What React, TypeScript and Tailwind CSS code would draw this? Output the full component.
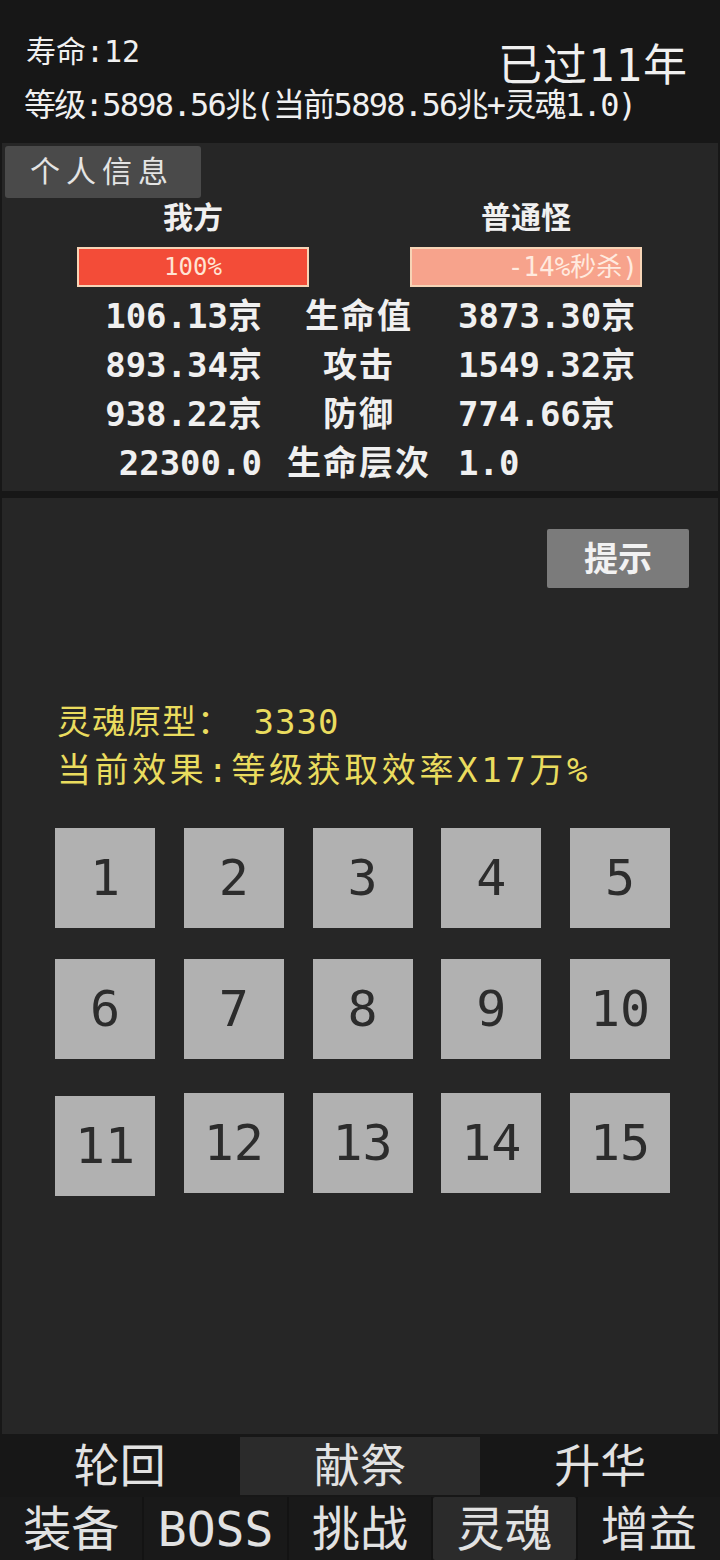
import React from "react";

const stats = [
  { mine: "106.13京", label: "生命值", enemy: "3873.30京" },
  { mine: "893.34京", label: "攻击", enemy: "1549.32京" },
  { mine: "938.22京", label: "防御", enemy: "774.66京" },
  { mine: "22300.0", label: "生命层次", enemy: "1.0" },
];

const gridRows = [
  [1, 2, 3, 4, 5],
  [6, 7, 8, 9, 10],
  [11, 12, 13, 14, 15],
];

const topTabs = [
  { title: "轮回", active: false },
  { title: "献祭", active: true },
  { title: "升华", active: false },
];

const bottomTabs = [
  { title: "装备", active: false },
  { title: "BOSS", active: false },
  { title: "挑战", active: false },
  { title: "灵魂", active: true },
  { title: "增益", active: false },
];

export default function App() {
  return (
    <div className="flex h-[1560px] w-[720px] flex-col overflow-hidden bg-[#171717] font-['DejaVu_Sans_Mono','Noto_Sans_CJK_SC',monospace] text-[#f0f0f0]">
      {/* header */}
      <header className="h-[143px] shrink-0 pl-[26px] pr-[32px] pt-[37px]">
        <div className="flex items-start justify-between">
          <span className="text-[30px] leading-none">寿命:12</span>
          <span className="mt-[7px] text-[44px] leading-none tracking-[1px]">已过11年</span>
        </div>
        <div className="-ml-[2px] mt-[1px] text-[32px] leading-none tracking-[-1.7px] whitespace-nowrap">
          等级:5898.56兆(当前5898.56兆+灵魂1.0)
        </div>
      </header>

      {/* battle info */}
      <section className="mx-[2px] flex h-[348px] shrink-0 flex-col bg-[#262626]">
        <div className="ml-[3px] mt-[3px] flex h-[52px] w-[196px] items-center rounded-[3px] bg-[#4a4a4a] pl-[25px] text-[30px] leading-none tracking-[6px] text-[#e4e4e4]">
          个人信息
        </div>
        <div className="ml-[75px] mt-[5px] grid grid-cols-[232px_232px] gap-x-[101px]">
          <div className="h-[34px] text-center text-[30px] font-bold leading-none">我方</div>
          <div className="h-[34px] text-center text-[30px] font-bold leading-none">普通怪</div>
          <div className="mt-[10px] flex h-[40px] items-center justify-center border-2 border-[#f6d4b6] bg-[#f34c38] text-[24px] leading-none text-[#ffe4d4]">
            100%
          </div>
          <div className="mt-[10px] flex h-[40px] items-center justify-end overflow-hidden whitespace-nowrap border-2 border-[#f6d4b6] bg-[#f7a38c] pr-[2px] text-[26px] leading-none text-[#ffeadf]">
            -14%秒杀)
          </div>
        </div>
        <div className="mt-[4px] grid grid-cols-[260px_194px_1fr] text-[34px] font-bold leading-none">
          {stats.map((s) => (
            <React.Fragment key={s.label}>
              <div className="flex h-[49px] items-center justify-end whitespace-nowrap">{s.mine}</div>
              <div className="flex h-[49px] items-center justify-center whitespace-nowrap tracking-[2px]">{s.label}</div>
              <div className="flex h-[49px] items-center whitespace-nowrap pl-[2px]">{s.enemy}</div>
            </React.Fragment>
          ))}
        </div>
      </section>

      {/* soul panel */}
      <section className="mx-[2px] mt-[7px] flex h-[936px] shrink-0 flex-col bg-[#262626]">
        <div className="flex justify-end pr-[29px] pt-[31px]">
          <div className="flex h-[59px] w-[142px] items-center justify-center rounded-[2px] bg-[#7b7b7b] text-[34px] font-semibold leading-none text-[#f2f2f2]">
            提示
          </div>
        </div>
        <div className="ml-[55px] mt-[117px] text-[34px] leading-none text-[#eadc5e]">
          <div className="whitespace-nowrap tracking-[1px]">灵魂原型： 3330</div>
          <div className="mt-[14px] whitespace-nowrap tracking-[3.6px]">当前效果:等级获取效率X17万%</div>
        </div>
        <div className="ml-[53px] mt-[41px] flex w-[615px] flex-col">
          {gridRows.map((row, ri) => (
            <div
              key={ri}
              className={
                "flex items-start justify-between " +
                (ri === 1 ? "mt-[31px]" : ri === 2 ? "mt-[34px]" : "")
              }
            >
              {row.map((n) => (
                <div
                  key={n}
                  className={
                    "flex h-[100px] w-[100px] items-center justify-center bg-[#b1b1b1] text-[50px] leading-none text-[#2c2c2c] " +
                    (n === 11 ? "mt-[3px]" : "")
                  }
                >
                  {n}
                </div>
              ))}
            </div>
          ))}
        </div>
      </section>

      {/* bottom navigation */}
      <nav className="mt-[3px] flex flex-col">
        <div className="grid h-[58px] grid-cols-3 gap-[1px]">
          {topTabs.map((t) => (
            <div
              key={t.title}
              className={
                "flex items-center justify-center text-[46px] leading-none text-[#e2e2e2] " +
                (t.active ? "bg-[#2b2b2b]" : "bg-[#171717]")
              }
            >
              {t.title}
            </div>
          ))}
        </div>
        <div className="mt-[2px] grid h-[63px] grid-cols-5 gap-[2px] bg-[#131313]">
          {bottomTabs.map((t) => (
            <div
              key={t.title}
              className={
                "flex items-center justify-center text-[48px] leading-none text-[#e2e2e2] " +
                (t.active ? "rounded-[2px] bg-[#2b2b2b]" : "bg-[#191919]")
              }
            >
              {t.title}
            </div>
          ))}
        </div>
      </nav>
    </div>
  );
}
